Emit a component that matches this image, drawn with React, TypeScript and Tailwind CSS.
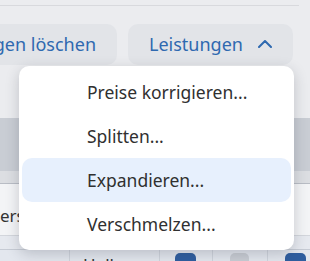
const schrift = { fontFamily: '"Noto Sans", "Open Sans", sans-serif' };

const eintraege = [
  { text: "Preise korrigieren...", aktiv: false },
  { text: "Splitten...", aktiv: false },
  { text: "Expandieren...", aktiv: true },
  { text: "Verschmelzen...", aktiv: false },
];

export default function App() {
  return (
    <div
      className="relative h-[261px] w-[310px] overflow-hidden bg-[#ebecef]"
      style={schrift}
    >
      <div className="mt-[5px] h-px w-[299px] bg-[#d8d9dd]" />

      {/* Werkzeugleiste */}
      <div className="mt-[18px] flex w-[293px] justify-end gap-[11px]">
        <button
          type="button"
          className="flex h-[41px] shrink-0 items-center rounded-[10px] bg-[#e2e4e8] pl-5 pr-[21px] text-[18px] text-[#2f69b0]"
        >
          Zuordnungen löschen
        </button>
        <button
          type="button"
          className="flex h-[41px] w-[165px] shrink-0 items-center gap-[15px] rounded-[10px] bg-[#e2e4e8] pl-[21px] text-[18px] text-[#2f69b0]"
        >
          Leistungen
          <svg width="14" height="8" viewBox="0 0 14 8" fill="none" className="mt-[-2px]">
            <path
              d="M1 7 L7 1 L13 7"
              stroke="currentColor"
              strokeWidth="2"
              strokeLinecap="round"
              strokeLinejoin="round"
            />
          </svg>
        </button>
      </div>

      {/* Tabelle dahinter */}
      <div className="mt-[53px] flex flex-col">
        <div className="h-[53px] bg-[#c9cdd4]" />
        <div className="h-[13px] border-b border-[#b9bdc5] bg-[#dcdee2]" />
        <div className="flex h-[52px] items-center border-b border-[#d3d6dc] bg-[#f3f4f6] text-[17px] text-[#333]">
          <span className="mt-[12px]">ersetzen</span>
        </div>
        <div className="h-[14px] border-b border-[#c6cbd4] bg-[#e6e9ef]" />
        <div className="flex h-[20px] bg-[#e3e7ee] text-[17px] text-[#333]">
          <div className="w-[70px] border-r border-[#cfd4dc]" />
          <div className="w-[90px] border-r border-[#cfd4dc] pl-[13px] pt-[5px] leading-[20px]">
            Hellgrau
          </div>
          <div className="w-[53px] border-r border-[#cfd4dc] pl-[15px] pt-[3px]">
            <div className="h-[21px] w-[21px] rounded-[5px] bg-[#2f5e9f]" />
          </div>
          <div className="w-[55px] border-r border-[#cfd4dc] pl-[17px] pt-[3px]">
            <div className="h-[21px] w-[19px] rounded-[5px] bg-[#c9cdd4]" />
          </div>
          <div className="pl-[17px] pt-[3px]">
            <div className="h-[21px] w-[21px] rounded-[5px] bg-[#2f5e9f]" />
          </div>
        </div>
      </div>

      {/* Aufgeklapptes Menü */}
      <div className="absolute left-[19px] top-[66px] flex w-[275px] flex-col rounded-[10px] bg-white px-[3px] py-[4px] shadow-[0_4px_14px_rgba(40,45,60,0.22)]">
        {eintraege.map((e) => (
          <div
            key={e.text}
            className={`flex h-[44px] items-center rounded-[10px] pl-[65px] text-[17.5px] text-[#303030] ${
              e.aktiv ? "bg-[#e7f0fd]" : ""
            }`}
          >
            {e.text}
          </div>
        ))}
      </div>
    </div>
  );
}
